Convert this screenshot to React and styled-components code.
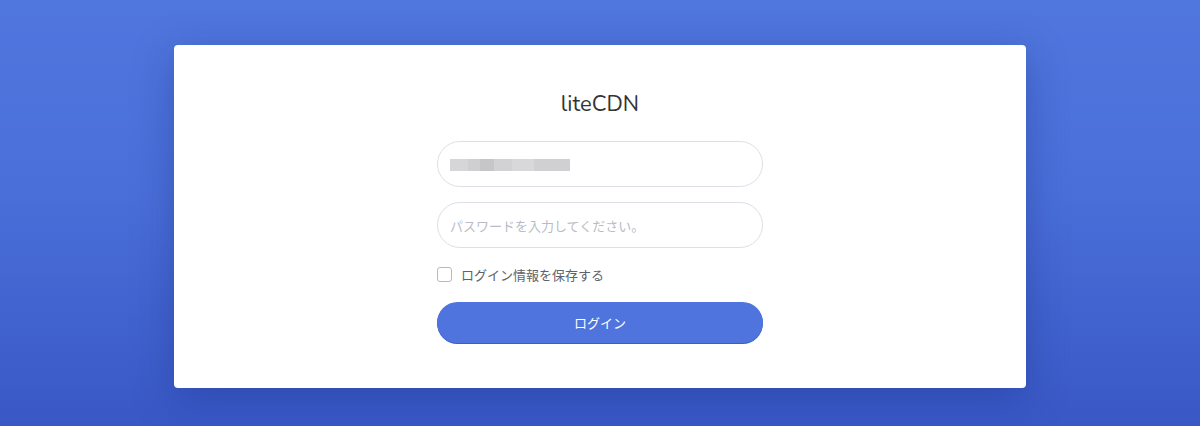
import React from "react";
import styled, { createGlobalStyle } from "styled-components";

const Global = createGlobalStyle`
  html, body { margin: 0; padding: 0; }
  body { font-family: "Noto Sans", "Noto Sans CJK JP", sans-serif; }
`;

const Page = styled.div`
  width: 1200px;
  height: 426px;
  box-sizing: border-box;
  padding-top: 45px;
  background: linear-gradient(180deg, #5077de 0%, #4a6fd9 45%, #3958c6 100%);
  display: flex;
  justify-content: center;
  align-items: flex-start;
`;

const Card = styled.div`
  width: 852px;
  height: 343px;
  box-sizing: border-box;
  background: #fff;
  border-radius: 4px;
  box-shadow: 0 10px 40px rgba(20, 40, 120, 0.35);
  display: flex;
  flex-direction: column;
  align-items: center;
  padding-top: 44px;
`;

const Title = styled.h1`
  margin: 0 0 22px;
  font-family: "Nunito", "Lato", "Noto Sans", sans-serif;
  font-weight: 400;
  font-size: 22px;
  line-height: 30px;
  color: #333;
`;

const Form = styled.div`
  width: 326px;
  display: flex;
  flex-direction: column;
`;

const Field = styled.div`
  height: 46px;
  box-sizing: border-box;
  border: 1px solid #dcdfe6;
  border-radius: 23px;
  display: flex;
  align-items: center;
  padding: 0 12px;
  margin-bottom: 15px;
  font-size: 13px;
  color: #b8bcc4;
  font-family: "Noto Sans CJK JP", sans-serif;
`;

const Redacted = styled.span`
  display: block;
  width: 120px;
  height: 12px;
  margin-top: 1px;
  filter: blur(0.6px);
  background: linear-gradient(
    90deg,
    #d6d6d8 0px, #d6d6d8 18px,
    #cfcfd2 18px, #cfcfd2 30px,
    #c6c6c9 30px, #c6c6c9 44px,
    #d2d2d5 44px, #d2d2d5 62px,
    #d8d8da 62px, #d8d8da 84px,
    #d0d0d3 84px, #d0d0d3 120px
  );
`;

const CheckRow = styled.label`
  display: flex;
  align-items: center;
  gap: 9px;
  height: 22px;
  font-size: 13px;
  color: #606266;
  font-family: "Noto Sans CJK JP", sans-serif;
`;

const Box = styled.span`
  width: 13px;
  height: 13px;
  border: 1px solid #b7bac2;
  border-radius: 3px;
  background: #fff;
`;

const Button = styled.button`
  margin-top: 17px;
  height: 41px;
  border: none;
  border-radius: 21px;
  background: #5074dd;
  color: #fff;
  font-size: 13px;
  font-family: "Noto Sans CJK JP", sans-serif;
  box-shadow: 0 1px 0 #3a5ec9;
  cursor: pointer;
`;

export default function App() {
  return (
    <>
      <Global />
      <Page>
        <Card>
          <Title>liteCDN</Title>
          <Form>
            <Field>
              <Redacted />
            </Field>
            <Field>パスワードを入力してください。</Field>
            <CheckRow>
              <Box />
              ログイン情報を保存する
            </CheckRow>
            <Button>ログイン</Button>
          </Form>
        </Card>
      </Page>
    </>
  );
}
